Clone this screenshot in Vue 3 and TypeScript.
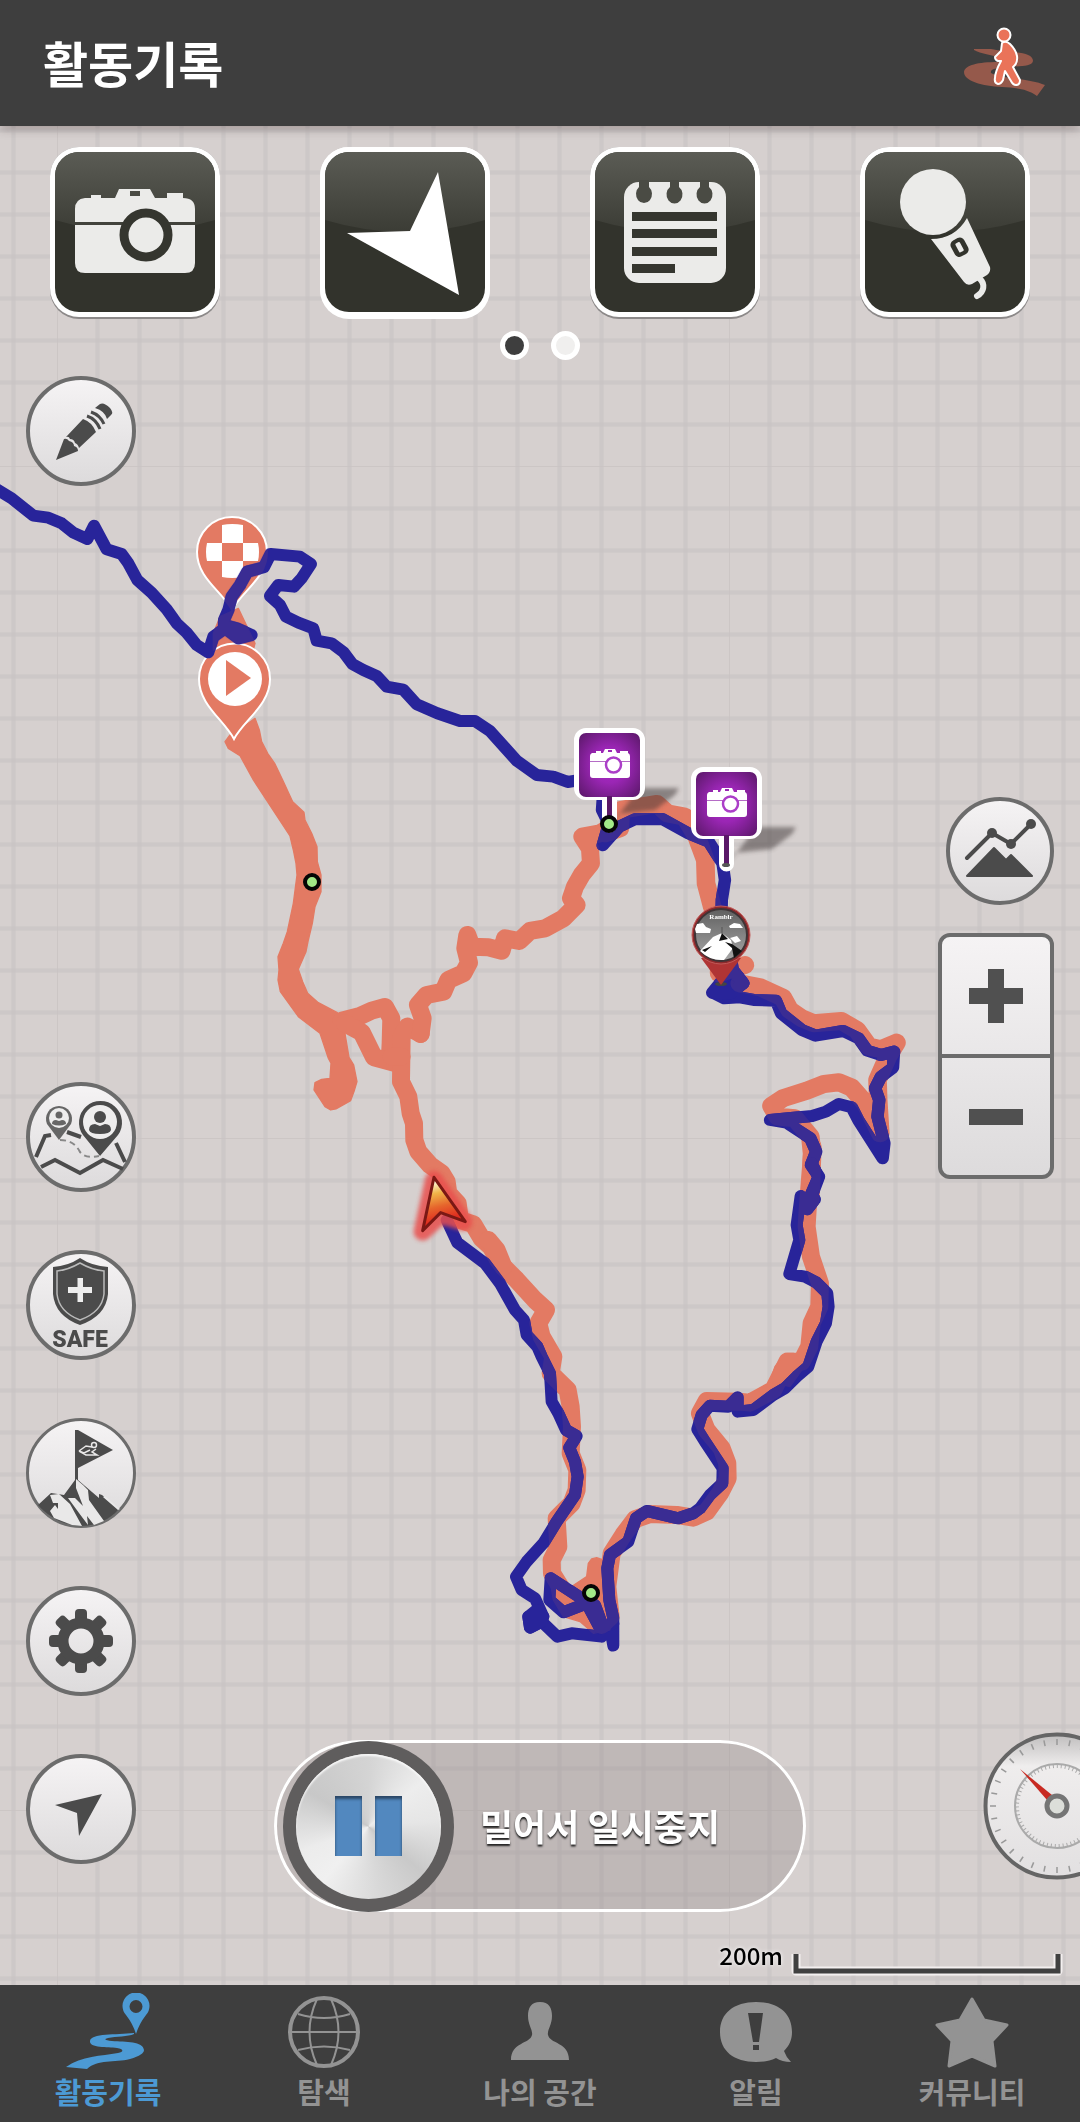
<script setup lang="ts">
interface Tool { id: string; label: string }
interface Tab { id: string; label: string; active?: boolean }

const tools: Tool[] = [
  { id: 'camera', label: '사진' },
  { id: 'arrow', label: '방향' },
  { id: 'note', label: '메모' },
  { id: 'mic', label: '음성' },
]

const tabs: Tab[] = [
  { id: 'record', label: '활동기록', active: true },
  { id: 'explore', label: '탐색' },
  { id: 'space', label: '나의 공간' },
  { id: 'alert', label: '알림' },
  { id: 'community', label: '커뮤니티' },
]

const gearTeeth = [0, 45, 90, 135, 180, 225, 270, 315]
const dialTicks = Array.from({ length: 32 }, (_, i) => i * 11.25)
const gridSteps = Array.from({ length: 15 }, (_, i) => (i + 1) * 42)
const cameraPins = [[609, 728], [726, 767]]
const waypoints = [[312, 882], [609, 824], [591, 1593]]
</script>

<template>
  <div class="screen">
    <header class="topbar">
      <h1>활동기록</h1>
      <button class="mode" aria-label="걷기">
        <svg viewBox="0 0 90 80" width="90" height="80">
          <path fill="#95594b" d="M14 26L31 26C50 30 73 28 73 38C72 44 58 43 46 44C36 45 30 46 31 50C40 56 70 55 85 62L77 73C66 65 55 65 42 64C22 63 4 58 4 49C5 42 18 39 38 39C46 39 50 38 45 36C34 32 20 31 14 27Z" />
          <g fill="#ea7359" stroke="#fff" stroke-width="2" stroke-linejoin="round">
            <path d="M42 20Q46 17 50 21Q56 27 57 33Q58 40 53 44L60 57Q60 62 56 62Q53 62 51 58L45 48L43 57Q41 61 38 61Q34 60 35 55Q35 49 41 38L38 38Q35 37 35 34L41 28Z" />
            <circle cx="44" cy="12" r="6.5" />
          </g>
        </svg>
      </button>
    </header>

    <main class="map-area">
      <svg class="map" viewBox="0 126 1080 1859" preserveAspectRatio="xMidYMin slice" aria-hidden="true">
        <defs>
          <pattern id="grid" x="57" y="466" width="672" height="672" patternUnits="userSpaceOnUse">
            <g fill="#c9c3c3">
              <rect width="1" height="672" opacity="0.8" />
              <rect width="672" height="1" opacity="0.8" />
              <template v-for="s in gridSteps" :key="s">
                <rect :x="s - 4" y="0" width="5" height="672" opacity="0.4" />
                <rect :x="s - 3" y="0" width="3" height="672" opacity="0.4" />
                <rect x="0" :y="s - 2" width="672" height="5" opacity="0.4" />
                <rect x="0" :y="s - 1" width="672" height="3" opacity="0.4" />
              </template>
            </g>
          </pattern>
          <radialGradient id="purple" cy="0.5" r="0.7">
            <stop offset="0" stop-color="#ac2bcb" />
            <stop offset="0.4" stop-color="#9a26b4" />
            <stop offset="1" stop-color="#5a1868" />
          </radialGradient>
          <linearGradient id="flame" x1="0" y1="0" x2="0.2" y2="1">
            <stop offset="0.12" stop-color="#fffbe2" />
            <stop offset="0.35" stop-color="#f0b448" />
            <stop offset="0.6" stop-color="#e6652c" />
            <stop offset="0.85" stop-color="#e02e20" />
          </linearGradient>
          <linearGradient id="badge" x1="0" y1="0" x2="0" y2="1">
            <stop offset="0" stop-color="#606060" />
            <stop offset="1" stop-color="#a8a8a8" />
          </linearGradient>
          <filter id="soft" x="-40%" y="-40%" width="180%" height="180%"><feGaussianBlur stdDeviation="2" /></filter>
          <filter id="glow" x="-40%" y="-40%" width="180%" height="180%"><feGaussianBlur stdDeviation="6" /></filter>
          <g id="route">
            <g transform="translate(230 780) scale(0.3333)">
              <path class="blob" d="M25 -515L75 -410L70 -390L-50 -390L-50 -440L-30 -490Z" />
              <path class="blob" d="M0 -135L40 -160L75 -185L88 -150L95 -115L113 -80L135 -48L158 0L188 65L222 97L225 120L245 160L261 200L262 245L273 285L273 335L255 380L247 430L235 480L228 515L205 568L218 605L233 640L265 668L322 698L345 760L357 832L371 855L381 905L372 935L362 962L318 987L302 990L285 980L252 930L255 908L275 898L300 895L303 850L295 835L270 760L205 710L151 635L144 600L147 570L144 530L160 490L172 455L190 370L201 285L198 250L190 210L180 168L70 0L30 -73L-5 -95L-15 -115Z" />
              <path d="M335 722L390 708L425 692L465 681L484 715L482 790L480 830" />
              <path d="M345 730L395 757L432 832L510 853" />
              <path d="M572 762L532 740L515 770L513 905L535 950L542 1000L552 1030L553 1080L565 1115L600 1155L635 1180L650 1205L655 1240L683 1270L690 1320L730 1333L755 1375L782 1400L805 1440" />
              <path d="M485 830L515 830M572 762L578 715L564 675L590 645L640 635L655 600L700 580L717 548L706 505L712 465L725 500L775 502L815 512L825 475L868 483L900 453L945 445L1000 415L1040 375L1023 355L1035 320L1055 285L1083 250L1080 205L1057 170L1110 160L1170 125" />
            </g>
            <g transform="translate(540 700) scale(0.3444 0.3333)">
              <path d="M190 400L232 385L235 330L340 312L370 340L420 350L455 410L480 480L482 550L500 620L525 700L520 820L595 795" />
              <path d="M580 850L640 862L705 893L725 930L760 955L795 970L875 963L920 990L955 1040L990 1048L1035 1028L1010 1070L980 1140L982 1200L988 1300L945 1210L905 1163L868 1147L825 1152L775 1172L705 1195L672 1218L690 1250L740 1255L785 1310L790 1360L785 1500" />
            </g>
            <g transform="translate(380 1160) scale(0.3333)">
              <path d="M1298 -40L1290 60L1283 150L1280 200L1293 290L1320 370L1318 440L1295 490L1288 560L1265 605L1222 605L1200 650L1180 690L1110 728L1075 725L980 723L960 760L980 810L1025 865L1042 910L1043 955L1020 1000L980 1055L940 1073L890 1065L810 1062L765 1078L730 1125L695 1180L682 1280L692 1370L665 1395" />
              <path class="blob" d="M1240 580L1215 580L1185 620L1170 665L1230 680L1280 610Z" />
              <path d="M355 300L370 320L410 360L465 420L498 450L475 490L485 530L520 590L512 640L563 690L572 740L576 800L572 880L592 930L590 990L575 1030L530 1075L535 1160L515 1200L516 1240L560 1310" />
              <path d="M325 240L350 270L370 320" />
              <path class="blob" d="M575 1280L620 1250L625 1210L635 1197L650 1193L700 1210L690 1410L640 1420L600 1385L550 1370L520 1320L510 1260Z" />
            </g>
          </g>
          <g id="finish">
            <path fill="#e37a63" stroke="#fff" stroke-width="2" d="M232 610C222 591 197 578 197 552A35 35 0 0 1 267 552C267 578 242 591 232 610Z" />
          </g>
          <g id="track">
            <path transform="translate(0 360) scale(0.3333)" d="M-10 388L35 415L100 467L145 473L185 490L220 518L262 537L282 497L320 568L365 582L385 610L412 660L455 698L500 748L530 790L560 818L590 855L625 877L640 830L675 805L715 835L755 825L710 805L672 795L672 780L685 750L695 710L720 675L742 635L792 622L812 582L900 590L933 612L905 655L882 680L835 675L810 708L840 735L858 770L895 788L940 805L950 842L995 850L1030 876L1057 912L1090 930L1130 948L1160 980L1210 989L1250 1033L1312 1060L1380 1083L1425 1083L1470 1113L1551 1203L1610 1245L1660 1250L1703 1266L1740 1260" />
            <path transform="translate(540 700) scale(0.3444 0.3333)" d="M182 300L180 330L200 372L182 436L230 380L275 358L355 357L430 400L490 425L530 490L537 540L528 600L527 640L545 720L560 810L590 850L560 868L502 878L535 895L580 892L620 900L685 902L700 940L760 990L800 1007L880 993L925 1015L950 1052L990 1065L1028 1055L1025 1103L990 1130L973 1165L985 1200L980 1250L1000 1330L995 1375L925 1262L905 1222L868 1212L830 1235L790 1248L668 1260L715 1268L785 1315L802 1355L787 1395L810 1430L788 1490" />
            <path class="solid" transform="translate(540 700) scale(0.3444 0.3333)" d="M550 815L575 830L590 850L555 880L500 878Z" />
            <path transform="translate(380 1160) scale(0.3333)" d="M1295 10L1316 50L1290 110L1305 118L1282 148L1262 108L1250 195L1258 240L1228 342L1275 350L1310 368L1342 400L1346 440L1338 490L1310 545L1285 620L1250 650L1215 685L1180 705L1120 750L1073 755L1073 712L1045 740L990 737L965 765L952 808L975 845L1028 925L1027 970L990 1005L960 1045L940 1060L895 1075L800 1053L768 1075L745 1145L690 1185L682 1225L688 1320L700 1375L700 1457L690 1400L665 1430L575 1420L532 1430L485 1385L450 1403L445 1370L490 1370L465 1315L425 1290L408 1250L440 1205L490 1150L530 1085L585 1005L593 950L585 905L568 863L590 828L558 810L535 760L515 725L510 640L485 590L472 560L440 525L432 480L405 450L360 370L315 310L232 248L200 180" />
            <path class="solid" transform="translate(380 1160) scale(0.3333)" d="M445 1370L470 1350L490 1370L485 1385L450 1403Z" />
            <path transform="translate(380 1160) scale(0.3333)" d="M700 1390L660 1405L620 1330L550 1357L508 1320L512 1255L620 1325L645 1335L665 1390" />
          </g>
          <mask id="overlap" class="alpha" maskUnits="userSpaceOnUse" x="0" y="126" width="1080" height="1859">
            <use href="#route" class="route" />
            <use href="#finish" />
          </mask>
        </defs>

        <rect y="126" width="1080" height="1859" fill="#d6d0cf" />
        <rect y="126" width="1080" height="1859" fill="url(#grid)" />

        <use href="#route" class="route" />
        <use href="#finish" />
        <g fill="#fff">
          <path d="M222 525Q232 523 243 525V543H222ZM222 561H243V577Q232 579 222 577ZM207 543H222V561H207Q205 552 207 543ZM243 543H258Q260 552 258 561H243Z" />
        </g>
        <path fill="#e37a63" stroke="#fff" stroke-width="2" d="M234 739C224 720 199 705 199 679A35 35 0 0 1 270 679C270 705 244 720 234 739Z" />
        <circle cx="235" cy="679" r="27" fill="#fff" />
        <path fill="#e37a63" d="M226 660L251 678L226 696Z" />

        <g class="shadow" filter="url(#soft)">
          <path v-for="[x, y] in cameraPins" :key="x" :transform="`translate(${x} ${y})`" d="M30 60H70L66 67L46 82L8 86L0 98L12 84Z" />
        </g>
        <use href="#track" class="track" />
        <g mask="url(#overlap)"><use href="#track" class="track over" /></g>

        <g v-for="[x, y] in cameraPins" :key="x" :transform="`translate(${x} ${y})`">
          <path fill="#fff" d="M-23 0H24A12 12 0 0 1 36 12V60A12 12 0 0 1 24 72H8V97A7 7 0 0 1 -7 97V72H-23A12 12 0 0 1 -35 60V12A12 12 0 0 1 -23 0Z" />
          <rect x="-30" y="5" width="61" height="64" rx="7" fill="url(#purple)" />
          <path fill="#5a1868" d="M-2 68H3V98H-2Z" />
          <ellipse cx="0" cy="98" rx="4" ry="2" fill="#555" />
          <g transform="translate(1 0)">
            <path fill="#fff" d="M-18 25H-14V23H-9V25H-7L-5 21H5L7 25H10V23H18V25Q20 26 20 28V47Q20 50 17 50H-17Q-20 50 -20 47V28Q-20 26 -18 25Z" />
            <path stroke="#b56cc6" d="M-20 33.500H20" /><path fill="#9a26b4" d="M-2 22H2V24H-2Z" />
            <circle cx="3.500" cy="37" r="7.500" fill="#fff" stroke="#ab3ec8" stroke-width="2.500" />
          </g>
        </g>

        <g>
          <ellipse cx="721" cy="984" rx="6" ry="2" fill="#444" />
          <path fill="#b03434" d="M721 985L701 958H741Z" />
          <circle cx="721" cy="935" r="29" fill="#8e2a2c" stroke="#c25a58" />
          <circle cx="721" cy="935" r="26" fill="url(#badge)" stroke="#3e3436" stroke-width="2" />
          <path fill="#fff" d="M700 951L713 937L722 933L731 940L733 948L724 960Q710 961 700 951ZM695 929L697 924L703 923L706 927L711 929L710 933H696ZM729 926L734 923L740 924L743 928H730ZM730 938L737 936L741 941L735 943Z" />
          <path fill="#111" d="M722 933L728 939L719 941ZM725 942L732 944L742 951L734 958L732 948ZM702 950L712 946L705 952Z" />
          <path stroke="#555" d="M722 927V934" />
          <text x="721" y="919" text-anchor="middle" class="badge-text">Ramblr</text>
        </g>

        <g v-for="[x, y] in waypoints" :key="y">
          <circle :cx="x" :cy="y" r="7" fill="#a3e988" stroke="#050505" stroke-width="4" />
        </g>

        <g transform="translate(230 780) scale(0.3333)" stroke-linejoin="round">
          <path filter="url(#glow)" fill="#e8504e" stroke="#e8504e" stroke-width="54" opacity="0.85" d="M612 1200L700 1325L632 1305L578 1355Z" />
          <path fill="url(#flame)" stroke="#7b1814" stroke-width="9" d="M612 1192L706 1325L632 1298L578 1352Z" />
        </g>
      </svg>

      <div class="overlay">
        <div class="tools">
          <button v-for="t in tools" :key="t.id" class="tool" :aria-label="t.label">
            <svg viewBox="0 0 170 172" width="170" height="172">
              <defs>
                <linearGradient :id="`gloss-${t.id}`" x1="0" y1="0" x2="0" y2="1">
                  <stop offset="0" stop-color="#5b5c55" />
                  <stop offset="1" stop-color="#3b3c35" />
                </linearGradient>
              </defs>
              <rect width="170" height="172" rx="29" :fill="t.id === 'arrow' ? '#fff' : '#8c8989'" />
              <rect width="170" height="170" rx="29" fill="#fff" />
              <rect x="5" y="5" width="160" height="160" rx="24" fill="#32332c" />
              <path :fill="`url(#gloss-${t.id})`" d="M29 5H141A24 24 0 0 1 165 29V73Q125 85 85 85Q45 85 5 73V29A24 24 0 0 1 29 5Z" />
              <g v-if="t.id === 'camera'">
                <path fill="#ebebe9" fill-rule="evenodd" d="M35 51H41V48H51V51H65L69 42H100L105 51H117V46H133V51Q145 51 145 62V116Q145 126 135 126H35Q25 126 25 116V62Q25 52 35 51ZM80 44V49H90V44Z" />
                <path fill="#42433c" d="M25 75H145V78H25Z" />
                <circle cx="96" cy="88" r="22" fill="#ebebe9" stroke="#35362f" stroke-width="9" />
              </g>
              <path v-else-if="t.id === 'arrow'" fill="#fff" d="M118 25L139 148L27 86L90 84Z" />
              <g v-else-if="t.id === 'note'">
                <rect x="34" y="35" width="102" height="101" rx="15" fill="#ebebe9" />
                <path fill="#4a4b44" d="M49 33H59V40A8 9 0 1 1 49 40ZM80 33H89V40A8 9 0 1 1 80 40ZM110 33H119V40A8 9 0 1 1 110 40Z" />
                <path fill="#35362f" d="M42 65H127V74H42ZM42 82H127V91H42ZM42 100H127V109H42ZM42 117H85V126H42Z" />
              </g>
              <g v-else fill="#ebebe9">
                <circle cx="73" cy="55" r="33" />
                <path d="M107 71L130 120Q131 125 127 128L112 137Q107 139 104 135L71 92Q95 92 107 71Z" />
                <rect x="92" y="91" width="15" height="18" rx="5" fill="#32332c" transform="rotate(-28 100 100)" />
                <rect x="97" y="95" width="5" height="10" rx="1" transform="rotate(-28 100 100)" />
                <path d="M119 131C126 137 124 145 117 149" fill="none" stroke="#ebebe9" stroke-width="6" stroke-linecap="round" />
              </g>
            </svg>
          </button>
        </div>

        <div class="pager" aria-hidden="true"><span class="dot on"></span><span class="dot"></span></div>

        <div class="rails">
          <div class="rail left">
            <button class="round" aria-label="그리기">
              <svg viewBox="0 0 110 110">
                <g fill="#4b4b4b">
                  <path d="M30 84L38 63Q41 62 43 65Q48 66 48 70Q52 71 52 75Z" />
                  <path d="M40 61L57 43Q66 46 70 56L53 72Q52 68 49 67Q48 63 44 63Q43 60 40 61Z" />
                  <path d="M69 32L74 28Q78 26 84 32Q88 37 85 39L81 43Q79 35 69 32Z" />
                </g>
                <path fill="none" stroke="#4b4b4b" stroke-width="3" d="M61 40Q70 43 74 53M65 36Q74 39 78 48" />
              </svg>
            </button>
            <div class="stack">
              <button class="round" aria-label="함께하기">
                <svg viewBox="0 0 110 110">
                  <g fill="none" stroke="#4b4b4b" stroke-width="4">
                    <path d="M10 75L19 54L25 53M41 50L55 55M90 61L99 80M15 85L29 78L54 91L77 78L97 87" />
                    <path stroke-width="2" stroke-dasharray="6 4" stroke="#888" d="M34 58Q48 58 54 70Q60 77 73 74" />
                  </g>
                  <path fill="#666" d="M33 58L21 42A13 13 0 1 1 45 42Z" />
                  <circle cx="33" cy="36" r="10" fill="#eee" />
                  <circle cx="33" cy="33" r="3.500" fill="#666" />
                  <path fill="#666" d="M26 42Q26 38 30 38L33 39L36 38Q40 38 40 42Q33 45 26 42Z" />
                  <path fill="#4b4b4b" d="M74 74L57 53A21.500 21.500 0 1 1 92 53Z" />
                  <circle cx="74" cy="40" r="17" fill="#efeeee" />
                  <circle cx="74" cy="35" r="6" fill="#4b4b4b" />
                  <path fill="#4b4b4b" d="M63 48Q63 42 69 42L74 44L79 42Q85 42 85 48Q84 52 74 52Q64 52 63 48Z" />
                </svg>
              </button>
              <button class="round" aria-label="세이프">
                <svg viewBox="0 0 110 110">
                  <path fill="#4b4b4b" d="M54 8Q66 16 82 17V44Q80 66 54 75Q29 66 27 44V17Q42 16 54 8Z" />
                  <path fill="none" stroke="#bbb" stroke-width="1.500" d="M54 13Q66 20 78 21V44Q76 62 54 70Q33 62 31 44V21Q42 20 54 13Z" />
                  <path fill="#eee" d="M51.500 28H57V37H66V43H57V52H51.500V43H42V37H51.500Z" />
                  <text x="54" y="97" text-anchor="middle" class="safe">SAFE</text>
                </svg>
              </button>
              <button class="round thin" aria-label="정상 도전">
                <svg viewBox="0 0 110 110">
                  <path fill="#4b4b4b" d="M49 12L52 12L87 32L52 50V62L73 80V76L76 77L93 91Q86 99 77 103Q66 108 55 108Q38 107 26 99Q17 93 12 87L25 75L38 77L49 62Z" />
                  <path fill="#e9e8e8" d="M24 77L33 76L44 86L56 108L46 107L28 100L24 93L29 87L32 91L32 85L27 85ZM50 61L57 67L62 72L63 82L78 103L68 107L61 98L62 107L53 95L42 80L49 80L57 88L50 70ZM79 78L94 91L92 92L77 79Z" />
                  <path fill="none" stroke="#e9e8e8" stroke-width="1.500" d="M53 33L60 28L66 29M53 33L60 37H71L66 34L70 31M53 33L58 35L64 32" />
                  <circle cx="68" cy="27" r="2.500" fill="none" stroke="#e9e8e8" stroke-width="1.500" />
                </svg>
              </button>
              <button class="round" aria-label="설정">
                <svg viewBox="0 0 110 110">
                  <rect v-for="a in gearTeeth" :key="a" x="49" y="23" width="12" height="16" rx="4" fill="#4b4b4b" :transform="`rotate(${a} 55 55)`" />
                  <circle cx="55" cy="55" r="18" fill="none" stroke="#4b4b4b" stroke-width="11" />
                </svg>
              </button>
              <button class="round" aria-label="현재 위치">
                <svg viewBox="0 0 110 110"><path fill="#4b4b4b" d="M76 40L53 82L51 59L29 51Z" /></svg>
              </button>
            </div>
          </div>

          <button class="slide">
            <span class="knob"><span class="disc"><span class="bar"></span><span class="bar"></span></span></span>
            <span class="slide-text">밀어서 일시중지</span>
          </button>

          <div class="rail right">
            <button class="round chart" aria-label="고도 그래프">
              <svg viewBox="0 0 108 108">
                <path fill="#4b4b4b" stroke="#4b4b4b" stroke-width="2" stroke-linejoin="round" d="M21 79L48 51L60 63L65 58L86 79Z" />
                <path fill="none" stroke="#4b4b4b" stroke-width="4" stroke-linecap="round" d="M21 61L46 36L65 47L85 27" />
                <g fill="#4b4b4b"><circle cx="46" cy="36" r="5" /><circle cx="65" cy="47" r="5" /><circle cx="85" cy="27" r="5" /></g>
              </svg>
            </button>
            <div class="zoom">
              <button aria-label="확대"><svg viewBox="0 0 54 54" width="54" height="54"><path d="M0 19H19V0H35V19H54V35H35V54H19V35H0Z" /></svg></button>
              <button aria-label="축소"><svg viewBox="0 0 54 54" width="54" height="54"><path d="M0 19H54V35H0Z" /></svg></button>
            </div>
            <button class="gauge" aria-label="계기판">
              <svg viewBox="0 0 148 148" width="148" height="148">
                <defs>
                  <linearGradient id="dial" x1="0" y1="0" x2="0" y2="1">
                    <stop offset="0" stop-color="#c0bebe" />
                    <stop offset="0.22" stop-color="#efeded" />
                    <stop offset="1" stop-color="#e2e0e1" />
                  </linearGradient>
                </defs>
                <circle cx="74" cy="74" r="71.500" fill="url(#dial)" stroke="#656565" stroke-width="4" />
                <path v-for="a in dialTicks" :key="a" stroke="#999" stroke-width="1.500" d="M74 7V13" :transform="`rotate(${a} 74 74)`" />
                <circle cx="74" cy="74" r="42" fill="none" stroke="#aaa" stroke-width="2" />
                <circle cx="74" cy="74" r="40" fill="none" stroke="#aaa" stroke-width="4" stroke-dasharray="1 3" />
                <path fill="#c82a22" d="M37 37L69 63L64 68Z" />
                <circle cx="74" cy="74" r="10" fill="#dcded9" stroke="#757575" stroke-width="5" />
              </svg>
            </button>
          </div>
        </div>

        <div class="scale">
          <span>200m</span>
          <svg viewBox="0 0 272 25" width="272" height="25" aria-hidden="true">
            <path fill="none" stroke="#f3efef" stroke-width="9" stroke-linejoin="round" d="M5 2V19H267V2" />
            <path fill="none" stroke="#404040" stroke-width="5" d="M5 2V19H267V2" />
          </svg>
        </div>
      </div>
    </main>

    <nav class="tabs">
      <a v-for="t in tabs" :key="t.id" href="#" :class="{ active: t.active }">
        <svg viewBox="0 0 84 76" width="84" height="76" aria-hidden="true">
          <g v-if="t.id === 'record'" fill="currentColor">
            <path fill-rule="evenodd" d="M70 41Q67 31 60 22A13.500 13.500 0 1 1 80 22Q73 31 70 41ZM70 7A6.500 6.500 0 1 0 70 20A6.500 6.500 0 1 0 70 7Z" />
            <path d="M68 40C50 42 25 40 24 48C23 55 42 54 51 55C58 56 58 59 52 60C35 63 16 63 0 74L21 76C32 66 48 70 64 66C74 63 78 60 78 57C77 48 60 49 46 48C38 47 38 46 42 45C50 43 62 44 68 41Z" />
          </g>
          <g v-else-if="t.id === 'explore'" fill="none" stroke="currentColor" stroke-width="2">
            <circle cx="42" cy="39" r="34" stroke-width="4" />
            <path d="M8 39H76M16 21Q42 29 68 21M16 57Q42 50 68 57M35 6Q20 39 35 72M49 6Q64 39 49 72" />
          </g>
          <path v-else-if="t.id === 'space'" fill="currentColor" d="M42 9C51 9 54 15 54 23C54 32 49 37 50 42C52 51 71 49 71 67H13C13 49 32 51 34 42C35 37 30 32 30 23C30 15 33 9 42 9Z" />
          <g v-else-if="t.id === 'alert'">
            <path fill="currentColor" d="M42 9C64 9 78 20 78 39C78 47 75 53 70 58Q72 64 77 69Q68 69 62 65C56 68 50 69 42 69C20 69 6 58 6 39C6 20 20 9 42 9Z" />
            <path fill="#3e3e3e" d="M34 20H49L45 49H39ZM39 52H45V57H39Z" />
          </g>
          <path v-else fill="currentColor" stroke="currentColor" stroke-width="3" stroke-linejoin="round" d="M42 6L54 27L77 32L62 48L65 73L42 63L19 73L22 48L7 32L30 27Z" />
        </svg>
        <span>{{ t.label }}</span>
      </a>
    </nav>
  </div>
</template>

<style>
body {
  margin: 0;
}
</style>

<style scoped>
.screen {
  display: flex;
  flex-direction: column;
  min-height: 100vh;
  font-family: 'Noto Sans CJK KR', 'Noto Sans', sans-serif;
  background: #d6d0cf;
}
button {
  margin: 0;
  padding: 0;
  border: 0;
  background: none;
  font: inherit;
  color: inherit;
  cursor: pointer;
}
svg {
  display: block;
}
.topbar {
  position: relative;
  z-index: 2;
  display: flex;
  align-items: center;
  justify-content: space-between;
  height: 126px;
  padding: 0 30px 0 43px;
  background: #3e3e3e;
  box-shadow: 0 2px 10px rgba(60, 40, 40, 0.4);
}
h1 {
  margin: 0;
  padding-bottom: 2px;
  font-size: 49px;
  line-height: 72px;
  font-weight: 700;
  color: #fff;
}
.map-area {
  position: relative;
  display: flex;
  flex: 1;
  overflow: hidden;
}
.map {
  position: absolute;
  inset: 0;
  width: 100%;
  height: 100%;
}
#route path {
  fill: none;
  stroke: #e37a63;
  stroke-width: 54;
  stroke-linecap: round;
  stroke-linejoin: round;
}
#route .blob {
  fill: #e37a63;
  stroke-width: 4;
}
#track path {
  fill: none;
  stroke-width: 36;
  stroke-linecap: round;
  stroke-linejoin: round;
}
#track .solid {
  fill: currentColor;
}
.track {
  color: #28249a;
  stroke: #28249a;
}
.over {
  color: #3a2c93;
  stroke: #3a2c93;
}
.alpha {
  mask-type: alpha;
}
.shadow {
  fill: #3c3434;
  opacity: 0.5;
}
.badge-text {
  font: 700 7px 'Liberation Serif', serif;
  fill: #fff;
}
.overlay {
  position: relative;
  display: flex;
  flex: 1;
  flex-direction: column;
  padding: 21px 0 8px;
}
.tools {
  display: flex;
  justify-content: space-between;
  padding: 0 50px;
}
.pager {
  display: flex;
  justify-content: center;
  gap: 22px;
  margin: 12px 0 16px;
}
.dot {
  box-sizing: border-box;
  width: 29px;
  height: 29px;
  border: 5px solid #fff;
  border-radius: 50%;
  background: #f0efee;
}
.dot.on {
  background: #3e3e3e;
}
.rails {
  display: grid;
  grid-template-columns: 1fr auto 1fr;
  flex: 1;
}
.rail {
  display: flex;
  flex-direction: column;
}
.left {
  justify-content: space-between;
  align-items: flex-start;
  padding: 0 0 48px 26px;
}
.stack {
  display: flex;
  flex-direction: column;
  gap: 58px;
}
.round {
  box-sizing: border-box;
  width: 110px;
  height: 110px;
  border: 4px solid #6c6c6c;
  border-radius: 50%;
  background: linear-gradient(#f5f3f4, #dddbdc);
}
.round svg {
  width: 110px;
  height: 110px;
  margin: -4px;
}
.round.thin {
  border-width: 3px;
}
.round.thin svg {
  margin: -3px;
}
.right {
  align-items: flex-end;
  padding: 421px 26px 32px 0;
}
.round.chart {
  width: 108px;
  height: 108px;
}
.chart svg {
  width: 108px;
  height: 108px;
}
.zoom {
  box-sizing: border-box;
  display: flex;
  flex-direction: column;
  width: 116px;
  height: 246px;
  margin-top: 28px;
  border: 4px solid #6c6c6c;
  border-radius: 12px;
  background: linear-gradient(#f5f3f4, #dddbdc);
}
.zoom button {
  display: grid;
  flex: 1;
  place-items: center;
  fill: #505050;
}
.zoom button + button {
  border-top: 4px solid #6c6c6c;
}
.gauge {
  margin: auto -77px 0 0;
}
.slide {
  display: flex;
  align-items: center;
  align-self: end;
  gap: 26px;
  min-width: 532px;
  height: 172px;
  padding-left: 9px;
  border-radius: 86px;
  background: rgba(140, 130, 130, 0.3);
  box-shadow: inset 0 0 0 3px #fff;
}
.knob {
  display: grid;
  place-items: center;
  width: 171px;
  height: 171px;
  border-radius: 50%;
  background: #5f5d5d;
}
.disc {
  display: flex;
  align-items: center;
  justify-content: center;
  gap: 13px;
  width: 145px;
  height: 145px;
  border-radius: 50%;
  background: conic-gradient(#d4d4d4, #ededed 50deg, #e6e6e6 85deg, #c9c9c9 130deg, #d8d8d8 170deg, #f0f0f0 220deg, #ececec 250deg, #c8c8c8 300deg, #d4d4d4);
  box-shadow: inset 0 2px 2px #f8f8f8;
}
.bar {
  width: 27px;
  height: 60px;
  background: #5288bf;
  box-shadow: inset 0 3px 3px #2a4665;
}
.slide-text {
  padding-bottom: 2px;
  font-size: 36px;
  line-height: 52px;
  font-weight: 700;
  color: #fff;
  text-shadow: 0 2px 2px #222;
}
.scale {
  display: flex;
  align-items: flex-end;
  justify-content: flex-end;
  gap: 8px;
  margin-top: 30px;
  padding-right: 17px;
  font-size: 24px;
  line-height: 25px;
  font-weight: 500;
  color: #000;
  text-shadow: 0 0 4px #fff;
}
.scale span {
  padding-bottom: 10px;
}
.tabs {
  display: flex;
  height: 137px;
  background: #3e3e3e;
}
.tabs a {
  display: flex;
  flex: 1;
  flex-direction: column;
  align-items: center;
  padding-top: 8px;
  font-size: 29px;
  line-height: 44px;
  font-weight: 700;
  color: #939393;
  text-decoration: none;
}
.tabs .active {
  color: #4c9ad4;
}
.safe {
  font: 900 23px Roboto, 'Liberation Sans', sans-serif;
  fill: #4b4b4b;
}
</style>
